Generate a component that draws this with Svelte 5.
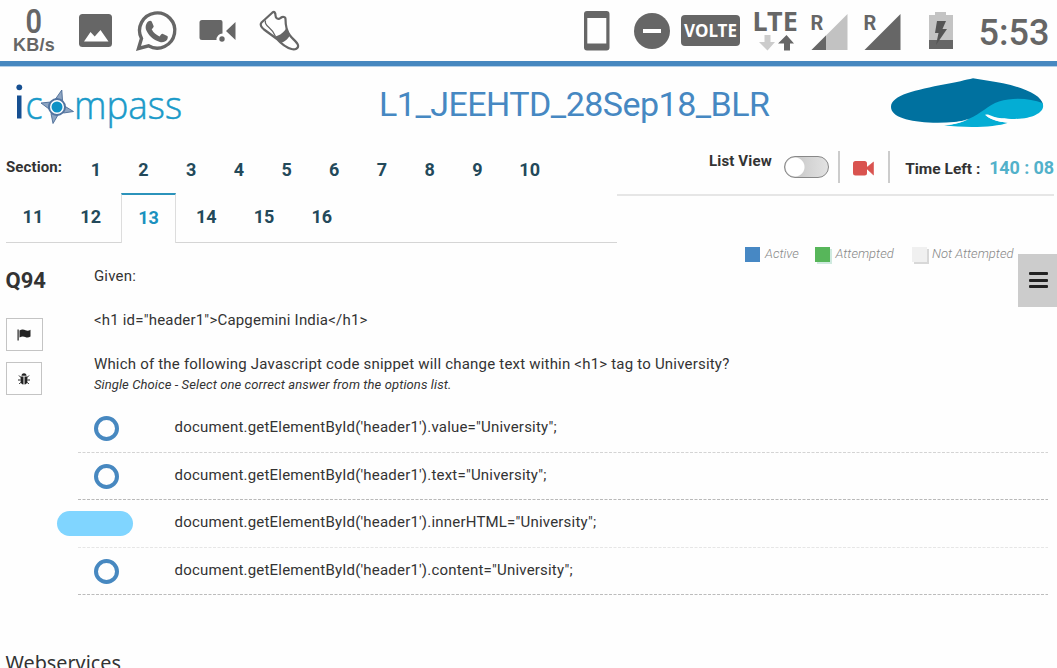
<script>
  const firstRow = [1, 2, 3, 4, 5, 6, 7, 8, 9, 10];
  const secondRow = [11, 12, 13, 14, 15, 16];
  const active = 13;
  const options = [
    { text: `document.getElementById('header1').value="University";`, line: '#d4d4d4' },
    { text: `document.getElementById('header1').text="University";`, line: '#b9b9b9' },
    { text: `document.getElementById('header1').innerHTML="University";`, line: '#e6e6e6', pressed: true },
    { text: `document.getElementById('header1').content="University";`, line: '#bcbcbc' }
  ];
</script>

<div class="page">
  <div class="status">
    <div class="net"><b>0</b><span>KB/s</span></div>
    <svg class="photo" width="33" height="33" viewBox="0 0 33 33"><rect width="33" height="33" rx="3.5" fill="#666" /><path d="M5 27.5l6.5-9.5 4.2 4.5 5.8-6.5 8 11.5z" fill="#fff" /></svg>
    <svg class="wa" width="41" height="41" viewBox="0 0 41 41"><path d="M2.500 38.500l3-10A17.600 17.600 0 1 1 12.500 35.800z" fill="none" stroke="#666" stroke-width="3.400" /><path d="M12.500 11.200c1-.8 2.600-.8 3.200.4l1.900 4.300c.3.9-.2 1.600-1.900 3.400 1.800 3.500 4.200 5.600 7.800 7.100 2-2.500 2.500-3 3.500-2.500l4.300 2.100c.8.5.6 2.300-.2 3.700-1.400 2-4.500 3-7.200 2.200C17 29.900 12.600 25.500 10.400 20.500c-1.500-3.500-.5-7.300 2.100-9.300z" fill="#666" /></svg>
    <svg class="cam" width="38" height="24" viewBox="0 0 38 24"><path d="M3 1h18.500q2 0 2 2v11.500a6 6 0 0 0-6 6.500H3q-2.500 0-2.500-2.500v-15Q.5 1 3 1zM27 12l9.500-9v18L27 12z" fill="#666" /><circle cx="23" cy="20" r="2.700" fill="#666" /></svg>
    <svg class="shoe" width="42" height="42" viewBox="0 0 42 42"><path d="M2.500 12.500L13.500 2.500c2-1.500 3 .5 3 3 0 3 3 4.500 5 2.500 2-1.500 5-1.500 5 1 0 5 .5 11.500 4.500 16.500 2.500 3.500 7 6.500 8 9.500 .8 3.500-3 5-6.500 4C27 37.500 22 33.500 18 29L5 19.500C2 17 .8 14.500 2.500 12.500z" fill="#fff" stroke="#666" stroke-width="2.200" stroke-linejoin="round" /><path d="M16 26.500c5-1 9.500-4.500 11.500-9l3.500 7c-1 3.500-5 7.500-9.500 8.500z" fill="#666" /><path d="M6.500 10.500c-1 3 1 5 3.500 7 3 2.500 5 5 6.500 9" fill="none" stroke="#666" stroke-width="1.300" /></svg>
    <svg class="phone" width="26" height="40" viewBox="0 0 26 40"><path fill-rule="evenodd" d="M3 0h19.500q3 0 3 3v33.500q0 3-3 3H3q-3 0-3-3V3q0-3 3-3zM3.300 7v25.500h19V7z" fill="#666" /></svg>
    <svg class="dnd" width="36" height="36" viewBox="0 0 36 36"><circle cx="18" cy="18" r="18" fill="#666" /><path d="M9 18h18" stroke="#fff" stroke-width="4" /></svg>
    <div class="volte">VOLTE</div>
    <div class="lte"><span>LTE</span><svg width="35" height="16" viewBox="0 0 35 16"><path d="M5.500 0h6v7H16L8.500 15.500 0 7h5.500z" fill="#ccc" /><path d="M25 15.500h6V8.500h4L27.500 0 19 8.500h6z" fill="#666" /></svg></div>
    <svg class="sig1" width="37" height="36" viewBox="0 0 37 36"><path d="M36.500 0v36H.5z" fill="#c2c2c2" /><path d="M15 21.500V36H.5z" fill="#666" /><text x="-.5" y="15.500" class="roam">R</text></svg>
    <svg class="sig2" width="37" height="36" viewBox="0 0 37 36"><path d="M36.500 0v36H.5z" fill="#666" /><text x="-.5" y="15.500" class="roam">R</text></svg>
    <svg class="bat" width="24" height="37" viewBox="0 0 24 37"><path d="M6 0h11v3h7v34H0V3h6z" fill="#c4c4c4" /><path d="M0 28h24v9H0z" fill="#666" /><path d="M8 9h9l-3.500 8H18L7 33l2.500-12H6z" fill="#555" /></svg>
    <div class="clock">5:53</div>
  </div>

  <header>
    <svg class="logo" width="172" height="54" viewBox="0 0 172 54">
      <rect x="3" y="13.500" width="4.500" height="23" fill="#164f91" /><circle cx="5.300" cy="5.300" r="2.900" fill="#164f91" />
      <text x="11.500" y="36.500" textLength="17" lengthAdjust="spacingAndGlyphs">c</text>
      <path d="M47.800 8l.7 10.500-7-1.500zM59.500 29.500l-10 1.500 1-7zM39 41.500l-2-10 7 1.500zM27 21l10-1-2 7z" fill="#8ea5c2" stroke="#4a6b96" stroke-width=".9" stroke-linejoin="round" />
      <circle cx="43" cy="25" r="8" fill="#fff" stroke="#5274a0" stroke-width="2" /><circle cx="43" cy="25" r="5.500" fill="#0f91c5" />
      <text x="60" y="36.500" textLength="108" lengthAdjust="spacingAndGlyphs">mpass</text>
    </svg>
    <h1>L1_JEEHTD_28Sep18_BLR</h1>
    <svg class="mark" width="153" height="50" viewBox="0 0 153 50">
      <path d="M0 29C0 17 25 12 54 6.300C65 4.300 75 2 82 .3C92 2 103 3.500 112 5.300C132 9.500 151 17 152 27L130 24L78 42C67 44 56 45 42 44.700C18 44 0 39 0 29z" fill="#00719f" />
      <path d="M53 47.300C64 46.500 73 44 78 40.700C90 36 97 27 108 23.500C122 19 140 20.500 151.500 25C155 33 144 40.500 124 41C114 41 106 40.500 97 36.500H94C98 41 107 43.800 117 44.700C104 49.500 75 50 53 47.300z" fill="#04add4" />
      <path d="M78 40.700C72 44 63 46.500 53 47.300C59 45 70 43.500 78 40.700zM94 36.700C98 41 107 43.800 117 44.700L122 41C112 41.500 103 40 94 36.700z" fill="#fefefe" />
    </svg>
  </header>

  <div class="bar">
    <nav>
      <div class="row one"><span class="label">Section:</span>{#each firstRow as n}<span class="num">{n}</span>{/each}</div>
      <div class="row two">{#each secondRow as n}<span class="num" class:on={n === active}>{n}</span>{/each}<i></i></div>
    </nav>
    <div class="tools">
      <span class="lv">List View</span>
      <span class="toggle"></span>
      <span class="rec"><svg width="21" height="15" viewBox="0 0 21 15"><rect width="14" height="14.500" rx="2.500" fill="#d9534f" /><path d="M13 7l7.500-6v13z" fill="#d9534f" stroke="#d9534f" stroke-width=".6" stroke-linejoin="round" /></svg></span>
      <span class="tl">Time Left :</span>
      <span class="time">140 : 08</span>
    </div>
  </div>

  <div class="legend">
    <span class="sq a"></span><em class="la">Active</em>
    <span class="sq b"></span><em class="lb">Attempted</em>
    <span class="sq c"></span><em class="lc">Not Attempted</em>
  </div>
  <div class="menu"><i></i><i></i><i></i></div>

  <main>
    <aside>
      <strong>Q94</strong>
      <span class="btn"><svg width="14" height="12" viewBox="0 0 14 12"><path d="M.5.500h1.200v11H.5zM2.500 1.500C5-.2 7 .6 8.500 1.300S12 1.800 13.500.800v6.800c-2 1.300-3.700 1.200-5.300.400s-3.700-.8-5.700.5z" fill="#222" /></svg></span>
      <span class="btn bug"><svg width="12" height="12" viewBox="0 0 12 12"><path d="M3.500 2.800a2.500 2.500 0 0 1 5 0z" fill="#222" /><path d="M2.600 3.500h2.900v8C3.800 11.500 2.600 10 2.600 8zM6.500 3.500h2.900V8c0 2-1.200 3.500-2.900 3.500z" fill="#222" /><path d="M3 4.500L1 2.500M9 4.500l2-2M2.600 7H0M9.400 7H12M3 9.200L1.200 11M9 9.200l1.800 1.800" stroke="#222" /></svg></span>
    </aside>
    <section>
      <p>Given:</p>
      <p class="tag">{'<h1 id="header1">Capgemini India</h1>'}</p>
      <p class="ask">{'Which of the following Javascript code snippet will change text within <h1> tag to University?'}</p>
      <p class="hint">Single Choice - Select one correct answer from the options list.</p>
    </section>
  </main>

  <div class="options">
    {#each options as o}
      <div class="opt">
        <span class="pick" class:pressed={o.pressed}></span>
        <span class="txt">{o.text}</span>
        <svg class="dash" width="970" height="1"><path d="M0 .5h970" stroke={o.line} stroke-dasharray="3 1.500" /></svg>
      </div>
    {/each}
  </div>
  <h2>Webservices</h2>
</div>

<style>
  :global(body) { background: #fff; overflow: hidden; }
  .page { position: relative; width: 1057px; height: 668px; overflow: hidden; background: #fefefe; color: #333; font-family: Roboto, sans-serif; }
  .page :global(*) { box-sizing: border-box; }
  svg { display: block; flex: none; overflow: visible; }
  p, h1, h2 { margin: 0; font-weight: 400; white-space: nowrap; }
  span, em, strong { white-space: nowrap; }

  .status { display: flex; align-items: flex-start; height: 67px; border-bottom: 1px solid #b4cfe7; box-shadow: inset 0 -5px #4788c0; color: #666; }
  .net { flex: none; width: 44px; margin: 7px 0 0 12px; display: flex; flex-direction: column; align-items: center; font-family: "Liberation Sans", sans-serif; font-weight: 700; }
  .net b { font: 600 34px/29px Roboto, sans-serif; transform: scaleX(.85); }
  .net span { font-size: 18px; line-height: 18px; letter-spacing: .3px; }
  .photo { margin: 14px 0 0 23px; }
  .wa { margin: 10px 0 0 24px; }
  .cam { margin: 19px 0 0 22px; }
  .shoe { margin: 10px 0 0 21.500px; }
  .phone { margin: 11px 0 0 283px; }
  .dnd { margin: 12.500px 0 0 24px; }
  .volte { flex: none; margin: 15px 0 0 11.500px; width: 59px; height: 31px; border-radius: 4px; background: #666; color: #fff; font: 700 17px/31px "Noto Sans", sans-serif; text-align: center; }
  .lte { flex: none; width: 46px; margin: 9px 0 0 12.500px; }
  .lte span { display: block; height: 26px; font: 700 27px/24px "Noto Sans", sans-serif; }
  .lte svg { margin-left: 6px; }
  .sig1 { margin: 14px 0 0 12px; }
  .sig2 { margin: 14px 0 0 16px; }
  .roam { font: 700 20px Roboto, sans-serif; fill: #666; }
  .bat { margin: 12px 0 0 28.500px; }
  .clock { margin: 12px 0 0 25.500px; font-size: 36px; line-height: 42px; font-weight: 500; }

  header { display: flex; height: 73px; }
  .logo { margin: 14.500px 0 0 14px; }
  .logo text { font: 300 38px "Open Sans", sans-serif; fill: #1a9ac9; stroke: #1a9ac9; stroke-width: .5px; }
  h1 { width: 394px; margin: 17px 0 0 193px; font-size: 34px; line-height: 40px; letter-spacing: -.52px; color: #4688c2; }
  .mark { margin: 11px 0 0 118px; }

  .bar { display: flex; height: 103px; }
  nav { width: 617px; padding-left: 6px; }
  .row { display: flex; color: #23495a; font-size: 18px; font-weight: 700; }
  .one { height: 53px; padding-top: 17px; line-height: 25px; }
  .label { width: 66px; font-size: 15px; line-height: 20px; letter-spacing: .1px; color: #333; }
  .one .num { width: 47.700px; text-align: center; }
  .one .num:last-child { width: 57px; }
  .two { height: 50px; line-height: 47px; }
  .two .num { width: 57.800px; height: 50px; text-align: center; border-bottom: 1px solid #d5d5d5; padding-right: 4px; }
  .two .num.on { width: 55px; margin: 0 3.300px 0 -.5px; line-height: 45px; border: 1px solid #ddd; border-top: 2px solid #2b93bb; border-bottom: 0; color: #1a91be; padding: 0; }
  .two i { flex: 1; border-bottom: 1px solid #d5d5d5; }
  .two .num.on + .num { margin-left: -3.300px; width: 61.100px; padding-right: .7px; }
  .tools { display: flex; width: 437px; height: 56px; border-bottom: 2px solid #e6e6e6; color: #333; font-weight: 700; }
  .lv { width: 63px; margin: 11px 0 0 92px; font-size: 15px; line-height: 20px; letter-spacing: .15px; }
  .toggle { width: 45px; height: 22px; margin: 16px 0 0 12px; border: 1.500px solid #888; border-radius: 11px; background: radial-gradient(circle at 10px 50%, #fff 9px, transparent 10px), linear-gradient(90deg, #bbb, #d2d2d2 50%, #e2e2e2); }
  .rec { width: 52px; height: 32px; margin: 11px 0 0 9.500px; border: solid #ccc; border-width: 0 2px; padding: 10px 0 0 13px; }
  .tl { width: 75px; margin: 19px 0 0 15px; font-size: 15.500px; line-height: 20px; }
  .time { margin: 17px 0 0 9px; font-size: 18px; line-height: 22px; letter-spacing: -.1px; color: #52b1ca; }

  .legend { display: flex; height: 18px; margin: 4px 0 0 744.500px; font-size: 13px; line-height: 14px; font-weight: 300; color: #888; }
  .sq { width: 15px; height: 15px; background: #4788c4; }
  .b { background: #57b65a; box-shadow: 2px 2px #cfeadf; }
  .c { background: #f0f0f0; box-shadow: 2px 2px #d8d8d8; }
  .legend em { padding-left: 5.500px; }
  .la { width: 55.500px; } .lb { width: 81.500px; } .lc { width: 100px; }
  .menu { position: absolute; left: 1018px; top: 254px; width: 39px; height: 53px; background: #ccc; padding: 18px 0 0 11px; display: grid; align-content: start; gap: 3.500px; }
  .menu i { width: 19px; height: 3px; border-radius: 1px; background: #222; }

  main { display: flex; height: 143px; padding-left: 5.500px; }
  aside { width: 88.400px; display: flex; flex-direction: column; align-items: flex-start; }
  aside strong { margin-top: 2px; height: 51px; font-size: 22px; line-height: 28px; color: #333; }
  .btn { display: grid; place-items: center; width: 37px; height: 33px; margin-bottom: 11px; border: 1px solid #c4c4c4; }
  .bug { width: 36px; }
  section { padding-top: 1px; font-size: 15px; line-height: 20px; letter-spacing: .2px; }
  .tag, .ask { margin-top: 24px; }
  .hint { margin-top: 1px; font-size: 13px; letter-spacing: .1px; font-style: italic; }

  .options { margin-left: 77.500px; }
  .opt { position: relative; display: flex; height: 47.500px; font-size: 15px; line-height: 20px; letter-spacing: .2px; }
  .pick { flex: none; width: 25px; height: 25px; margin: 8px 56px 0 16px; border: 4.500px solid #4788c0; border-radius: 50%; }
  .pick.pressed { width: 76px; margin: 8px 42px 0 -21px; background: #80d5ff; border: 0; border-radius: 13px; }
  .txt { padding-top: 9px; }
  .dash { position: absolute; left: 0; bottom: 3px; }
  h2 { margin: 53px 0 0 5.500px; font: 400 19.800px/24px "Noto Sans", sans-serif; color: #333; }
</style>
